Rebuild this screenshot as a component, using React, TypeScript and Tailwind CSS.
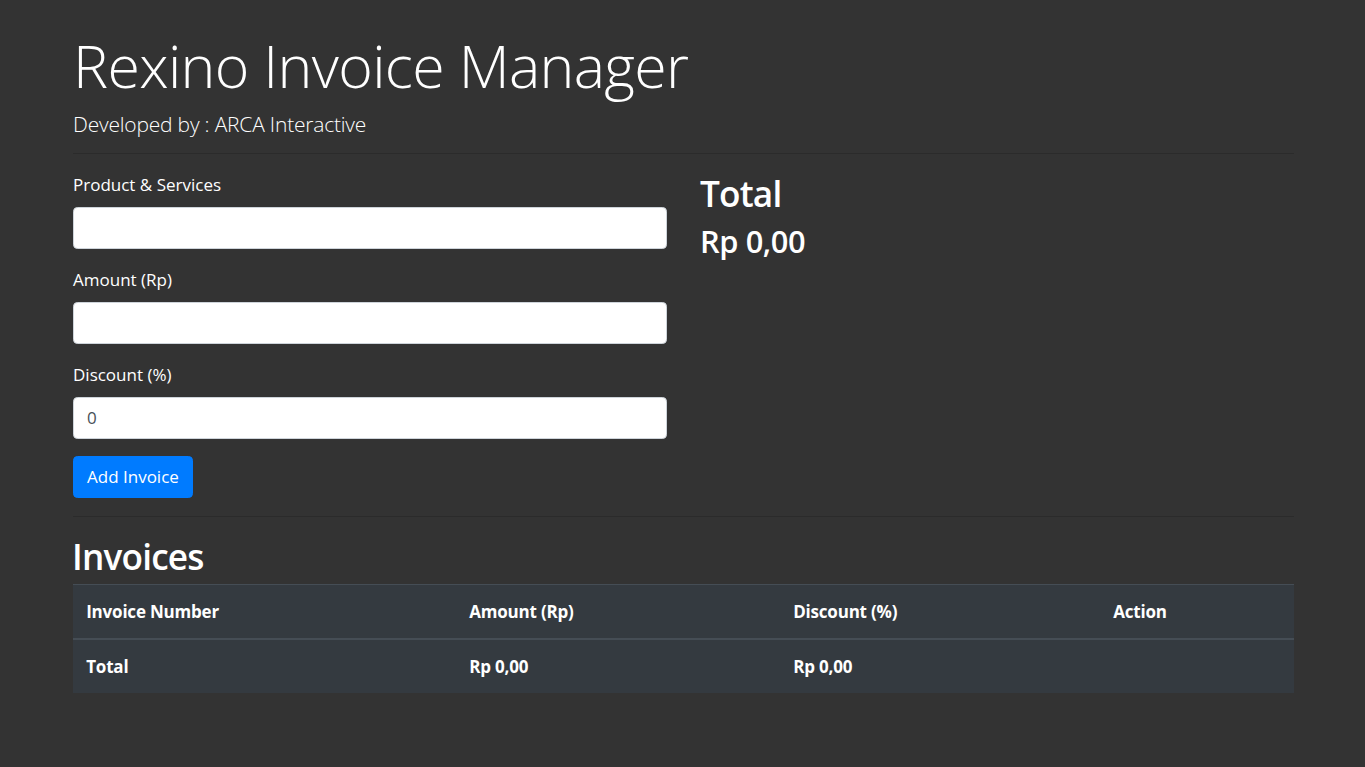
export default function App() {
  const font = { fontFamily: '"Segoe UI", "Open Sans", "Liberation Sans", sans-serif' };

  return (
    <div className="min-h-[767px] bg-[#333333] text-white" style={font}>
      <div className="ml-[73px] w-[1221px] pt-[28px]">
        <h1 className="text-[59px] font-light leading-[74px] tracking-[-0.65px] mb-[5.8px]">
          Rexino Invoice Manager
        </h1>
        <p className="text-[21px] font-light leading-[33px] tracking-[-0.2px]">Developed by : ARCA Interactive</p>
        <hr className="mt-[12.6px] mb-[17.6px] border-t border-[#2b2b2b]" />

        <div className="flex gap-[33px]">
          <form className="w-[594px]" onSubmit={(e) => e.preventDefault()}>
            <div className="mb-[17.6px]">
              <label className="block text-[17px] leading-[26.4px] mb-[8.8px]">Product &amp; Services</label>
              <input className="block w-full h-[42px] rounded-[4.4px] border border-[#ced4da] bg-white px-[13px] text-[17.6px] text-[#495057] outline-none" />
            </div>
            <div className="mb-[17.6px]">
              <label className="block text-[17px] leading-[26.4px] mb-[8.8px]">Amount (Rp)</label>
              <input className="block w-full h-[42px] rounded-[4.4px] border border-[#ced4da] bg-white px-[13px] text-[17.6px] text-[#495057] outline-none" />
            </div>
            <div className="mb-[17.6px]">
              <label className="block text-[17px] leading-[26.4px] mb-[8.8px]">Discount (%)</label>
              <input
                defaultValue="0"
                className="block w-full h-[42px] rounded-[4.4px] border border-[#ced4da] bg-white px-[13px] text-[17px] text-[#495057] outline-none"
              />
            </div>
            <button
              type="submit"
              className="h-[42px] rounded-[4.4px] border border-[#007bff] bg-[#007bff] px-[13px] text-[17px] leading-[26.4px] text-white"
            >
              Add Invoice
            </button>
          </form>

          <div className="flex-1">
            <h2 className="text-[35.2px] font-semibold leading-[1.2] tracking-[-0.8px] mb-[8.8px]">Total</h2>
            <h3 className="text-[30.8px] font-semibold leading-[1.2] tracking-[-0.4px]">Rp 0,00</h3>
          </div>
        </div>

        <hr className="my-[17.6px] border-t border-[#2b2b2b]" />

        <h2 className="text-[35.2px] font-semibold leading-[1.2] tracking-[-0.8px] mb-[6.8px] -ml-[1px]">Invoices</h2>
        <table className="w-full border-collapse bg-[#343a40] text-[17px] font-bold tracking-[-0.2px]">
          <thead>
            <tr>
              <th className="w-[383px] border-t border-b-2 border-[#454d55] px-[13.2px] pt-[14px] pb-[13.4px] text-left leading-[26.4px]">Invoice Number</th>
              <th className="w-[324px] border-t border-b-2 border-[#454d55] px-[13.2px] pt-[14px] pb-[13.4px] text-left leading-[26.4px]">Amount (Rp)</th>
              <th className="w-[320px] border-t border-b-2 border-[#454d55] px-[13.2px] pt-[14px] pb-[13.4px] text-left leading-[26.4px]">Discount (%)</th>
              <th className="border-t border-b-2 border-[#454d55] px-[13.2px] pt-[14px] pb-[13.4px] text-left leading-[26.4px]">Action</th>
            </tr>
          </thead>
          <tbody>
            <tr>
              <td className="px-[13.2px] py-[13.2px] leading-[26.4px]">Total</td>
              <td className="px-[13.2px] py-[13.2px] leading-[26.4px]">Rp 0,00</td>
              <td className="px-[13.2px] py-[13.2px] leading-[26.4px]">Rp 0,00</td>
              <td className="px-[13.2px] py-[13.2px] leading-[26.4px]"></td>
            </tr>
          </tbody>
        </table>
      </div>
    </div>
  );
}
